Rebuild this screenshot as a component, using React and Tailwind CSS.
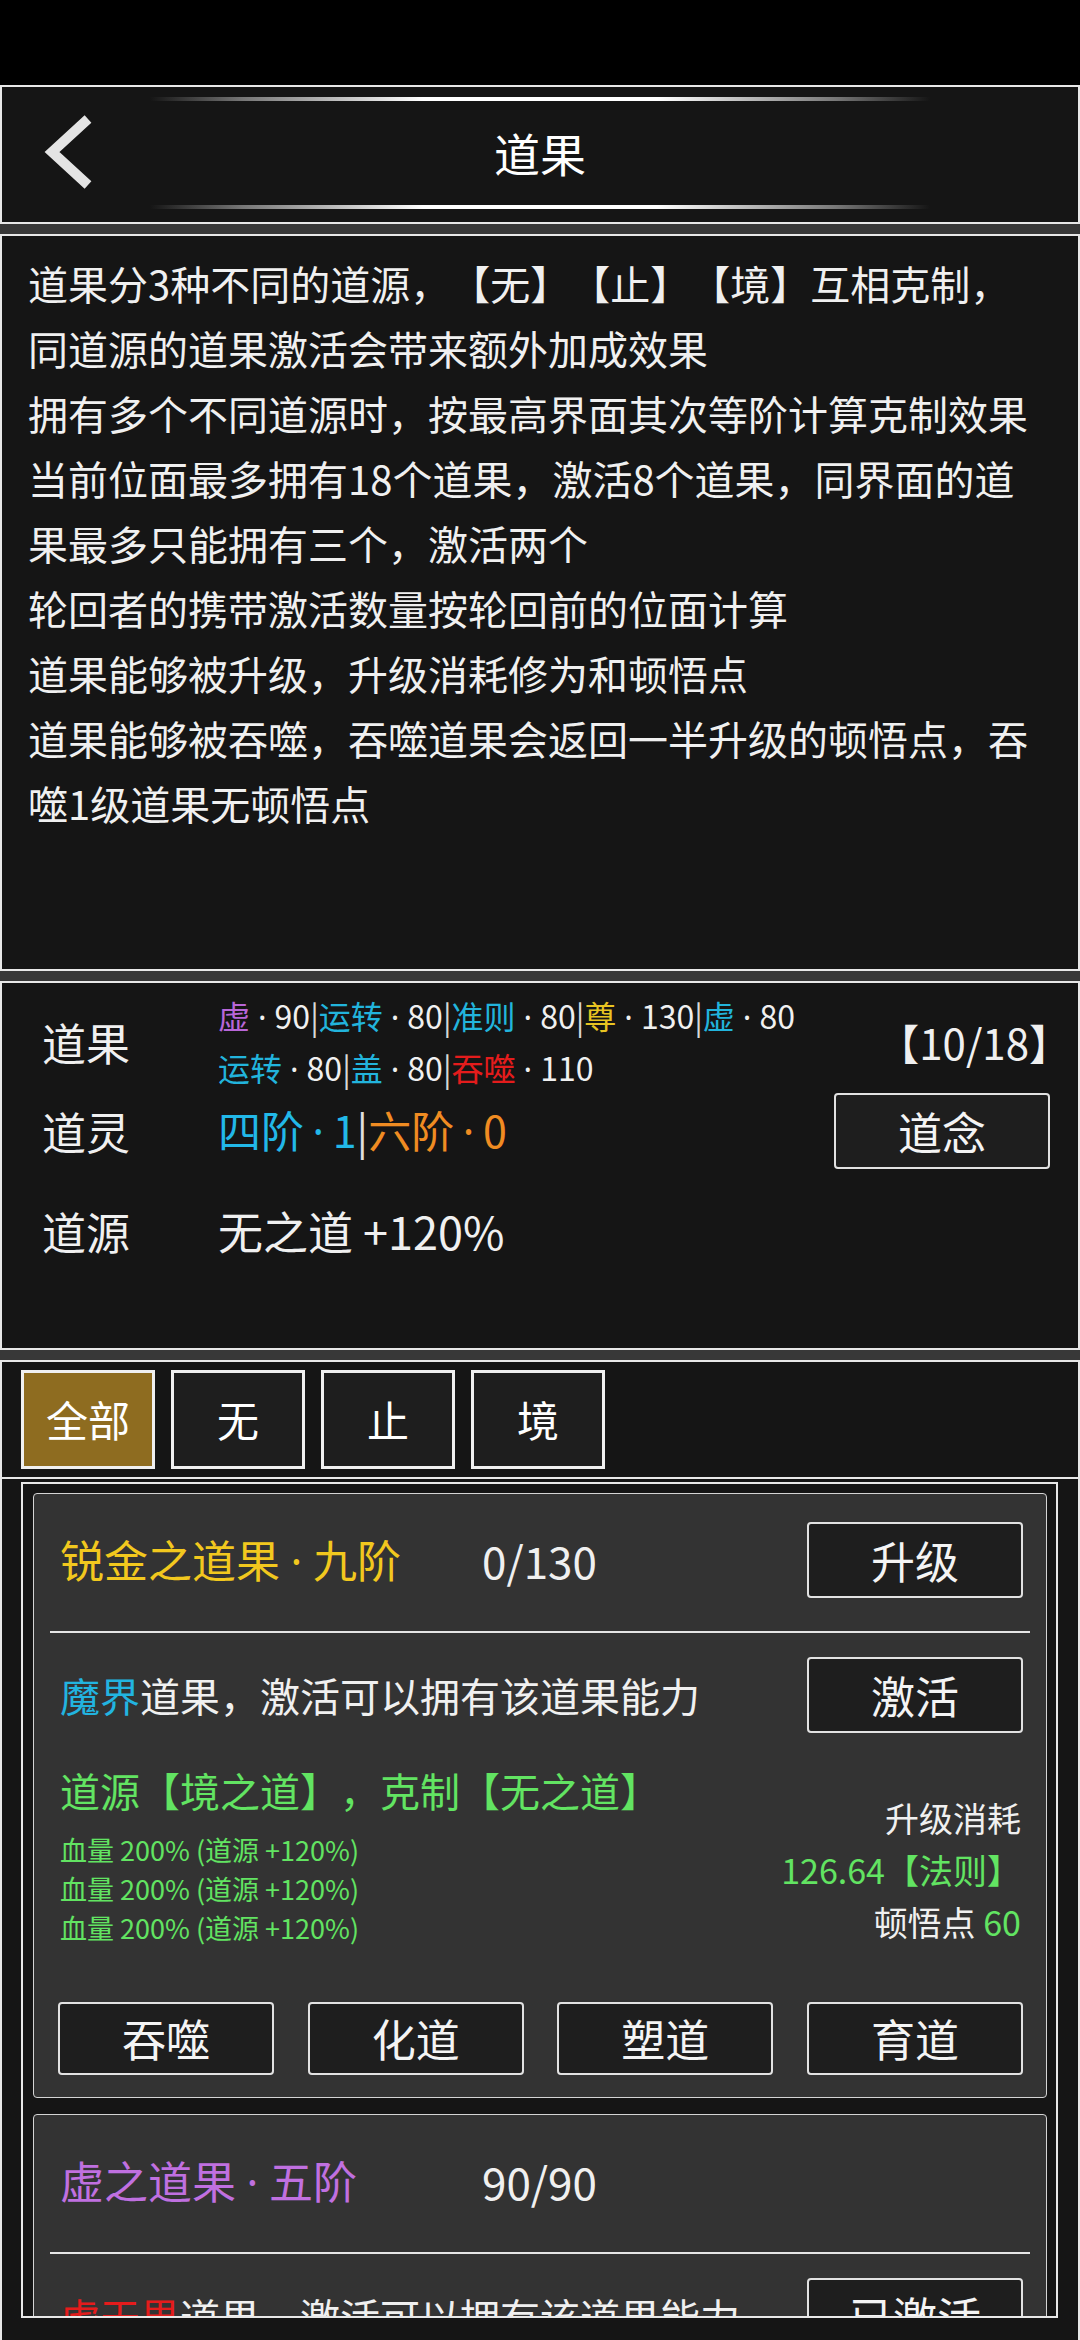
import React from 'react';

const rules = [
    '道果分3种不同的道源，【无】【止】【境】互相克制，',
    '同道源的道果激活会带来额外加成效果',
    '拥有多个不同道源时，按最高界面其次等阶计算克制效果',
    '当前位面最多拥有18个道果，激活8个道果，同界面的道',
    '果最多只能拥有三个，激活两个',
    '轮回者的携带激活数量按轮回前的位面计算',
    '道果能够被升级，升级消耗修为和顿悟点',
    '道果能够被吞噬，吞噬道果会返回一半升级的顿悟点，吞',
    '噬1级道果无顿悟点',
];

const owned = [
    [
        { name: '虚', color: 'text-[#b866d8]', value: 90 },
        { name: '运转', color: 'text-[#22b4dc]', value: 80 },
        { name: '准则', color: 'text-[#22b4dc]', value: 80 },
        { name: '尊', color: 'text-[#e8c422]', value: 130 },
        { name: '虚', color: 'text-[#22b4dc]', value: 80 },
    ],
    [
        { name: '运转', color: 'text-[#22b4dc]', value: 80 },
        { name: '盖', color: 'text-[#22b4dc]', value: 80 },
        { name: '吞噬', color: 'text-[#e41c1c]', value: 110 },
    ],
];

const tabs = ['全部', '无', '止', '境'];

const cards = [
    { name: '锐金之道果', level: '九阶', titleColor: 'text-[#f2c81e]', progress: '0/130', action: '升级', realm: '魔界', realmColor: 'text-[#22b4e0]', state: '激活' },
    { name: '虚之道果', level: '五阶', titleColor: 'text-[#c070e0]', progress: '90/90', action: null, realm: '虚天界', realmColor: 'text-[#e41c1c]', state: '已激活' },
];

// latin middle dot with some air, the CJK one is a full em wide
function Dot({ className = 'mx-[0.24em]' }) {
    return <span className={`font-['Noto_Sans',sans-serif] ${className}`}>·</span>;
}

function Btn({ children, className = '' }) {
    return (
        <div className={`flex items-center justify-center w-[216px] border-2 border-[#e2e2e2] rounded-[4px] bg-[#1e1e1e] text-[44px] leading-[1.2] text-[#f4f4f4] ${className}`}>
            {children}
        </div>
    );
}

function FruitCard({ card }) {
    return (
        <div className="shrink-0 w-[1014px] border border-[#d4d4d4] rounded-[4px] bg-[#333333]">
            {/* title row */}
            <div className="flex items-center h-[76px] mt-[28px] pl-[26px] pr-[23px]">
                <div className={`w-[422px] text-[44px] leading-[1.2] ${card.titleColor}`}>
                    {card.name}<Dot />{card.level}
                </div>
                <div className="flex-1 text-[44px] leading-[1.2]">{card.progress}</div>
                {card.action && <Btn className="h-[76px]">{card.action}</Btn>}
            </div>
            <div className="mx-[16px] mt-[33px] h-[2px] bg-[#e6e6e6]"></div>
            {/* realm row */}
            <div className="flex items-center h-[76px] mt-[24px] pl-[26px] pr-[23px]">
                <div className="flex-1 text-[40px] leading-[1.2]">
                    <span className={card.realmColor}>{card.realm}</span>道果，激活可以拥有该道果能力
                </div>
                <Btn className="h-[76px]">{card.state}</Btn>
            </div>
            {/* effects + cost */}
            <div className="flex items-start mt-[29px] pl-[26px] pr-[25px]">
                <div className="flex-1 text-[#62e462]">
                    <div className="text-[40px] leading-[56px]">道源【境之道】，克制【无之道】</div>
                    <div className="mt-[12px] text-[27px] leading-[39px]">
                        <div>血量 200% (道源 +120%)</div>
                        <div>血量 200% (道源 +120%)</div>
                        <div>血量 200% (道源 +120%)</div>
                    </div>
                </div>
                <div className="mt-[30px] text-right text-[34px] leading-[52px]">
                    <div>升级消耗</div>
                    <div className="text-[#62e462]">126.64【法则】</div>
                    <div>顿悟点 <span className="text-[#62e462]">60</span></div>
                </div>
            </div>
            {/* actions */}
            <div className="flex justify-between mt-[54px] mb-[22px] pl-[24px] pr-[23px]">
                <Btn className="h-[73px]">吞噬</Btn>
                <Btn className="h-[73px]">化道</Btn>
                <Btn className="h-[73px]">塑道</Btn>
                <Btn className="h-[73px]">育道</Btn>
            </div>
        </div>
    );
}

export default function App() {
    return (
        <div className="w-[1080px] h-[2340px] overflow-hidden bg-black text-[#f0f0f0] font-['Noto_Sans_CJK_SC','Noto_Sans',sans-serif] [text-spacing-trim:space-all]">
            {/* status bar */}
            <div className="h-[85px]"></div>

            {/* header */}
            <div className="h-[139px] border-2 border-[#e8e8e8] bg-[#151515] flex flex-col pt-[10px]">
                <div className="mx-auto w-[780px] h-[4px] bg-[linear-gradient(90deg,transparent,#777_12%,#fff_35%,#fff_65%,#777_88%,transparent)]"></div>
                <div className="flex items-center h-[104px]">
                    <div className="w-[160px]">
                        <svg width="120" height="104" viewBox="0 0 120 104">
                            <polyline points="86,18 50,51 86,84" fill="none" stroke="#e4e4e4" strokeWidth="10" strokeLinejoin="miter" />
                        </svg>
                    </div>
                    <div className="flex-1 text-center text-[46px] leading-[1.2] text-white">道果</div>
                    <div className="w-[160px]"></div>
                </div>
                <div className="mx-auto w-[780px] h-[4px] bg-[linear-gradient(90deg,transparent,#777_12%,#fff_35%,#fff_65%,#777_88%,transparent)]"></div>
            </div>
            <div className="h-[10px] bg-[#383838]"></div>

            {/* rules */}
            <div className="h-[737px] border-2 border-[#e8e8e8] bg-[#151515] pl-[26px] pt-[15px]">
                <div className="text-[40px] leading-[65px] whitespace-nowrap">
                    {rules.map((line, i) => (
                        <p key={i}>{line}</p>
                    ))}
                </div>
            </div>
            <div className="h-[10px] bg-[#383838]"></div>

            {/* stats */}
            <div className="h-[369px] border-2 border-[#e8e8e8] bg-[#151515] pl-[40px] pr-[28px] pt-[9px]">
                <div className="flex items-center h-[100px]">
                    <div className="w-[176px] text-[44px] leading-[1.2]">道果</div>
                    <div className="flex-1 text-[32px] leading-[50px]">
                        {owned.map((row, r) => (
                            <div key={r}>
                                {row.map((o, i) => (
                                    <span key={i}>
                                        {i > 0 && <span className="text-[#d8d8d8]">|</span>}
                                        <span className={o.color}>{o.name}</span><Dot className="mx-[0.25em]" />{o.value}
                                    </span>
                                ))}
                            </div>
                        ))}
                    </div>
                    <div className="-mr-[21px] text-[42px] leading-[1.2]">【10/18】</div>
                </div>
                <div className="flex items-center h-[76px] mt-px">
                    <div className="w-[176px] text-[44px] leading-[1.2]">道灵</div>
                    <div className="flex-1 text-[43px] leading-[1.2]">
                        <span className="text-[#22b8e8]">四阶<Dot className="mx-[0.2em]" />1</span>
                        <span className="text-[#e0e0e0]">|</span>
                        <span className="text-[#f08c22]">六阶<Dot className="mx-[0.2em]" />0</span>
                    </div>
                    <Btn className="h-[76px]">道念</Btn>
                </div>
                <div className="flex items-center h-[60px] mt-[32px]">
                    <div className="w-[176px] text-[44px] leading-[1.2]">道源</div>
                    <div className="text-[45px] leading-[1.2]">无之道 +120%</div>
                </div>
            </div>
            <div className="h-[10px] bg-[#383838]"></div>

            {/* tabs */}
            <div className="h-[119px] border-2 border-[#e8e8e8] bg-[#151515] flex gap-[16px] pl-[19px] pt-[8px]">
                {tabs.map((t, i) => (
                    <div
                        key={t}
                        className={`flex items-center justify-center w-[134px] h-[99px] border-[3px] border-[#f0f0f0] text-[42px] leading-[1.2] text-white ${i === 0 ? 'bg-[#8e6c20]' : 'bg-[#1e1e1e]'}`}
                    >
                        {t}
                    </div>
                ))}
            </div>

            {/* list */}
            <div className="h-[861px] border-x-2 border-[#e8e8e8] bg-[#151515] pl-[19px] pt-[3px]">
                <div className="w-[1037px] h-[836px] border-2 border-[#e8e8e8] overflow-hidden flex flex-col gap-[16px] pl-[10px] pt-[9px]">
                    {cards.map((c, i) => (
                        <FruitCard key={i} card={c} />
                    ))}
                </div>
            </div>
        </div>
    );
}
